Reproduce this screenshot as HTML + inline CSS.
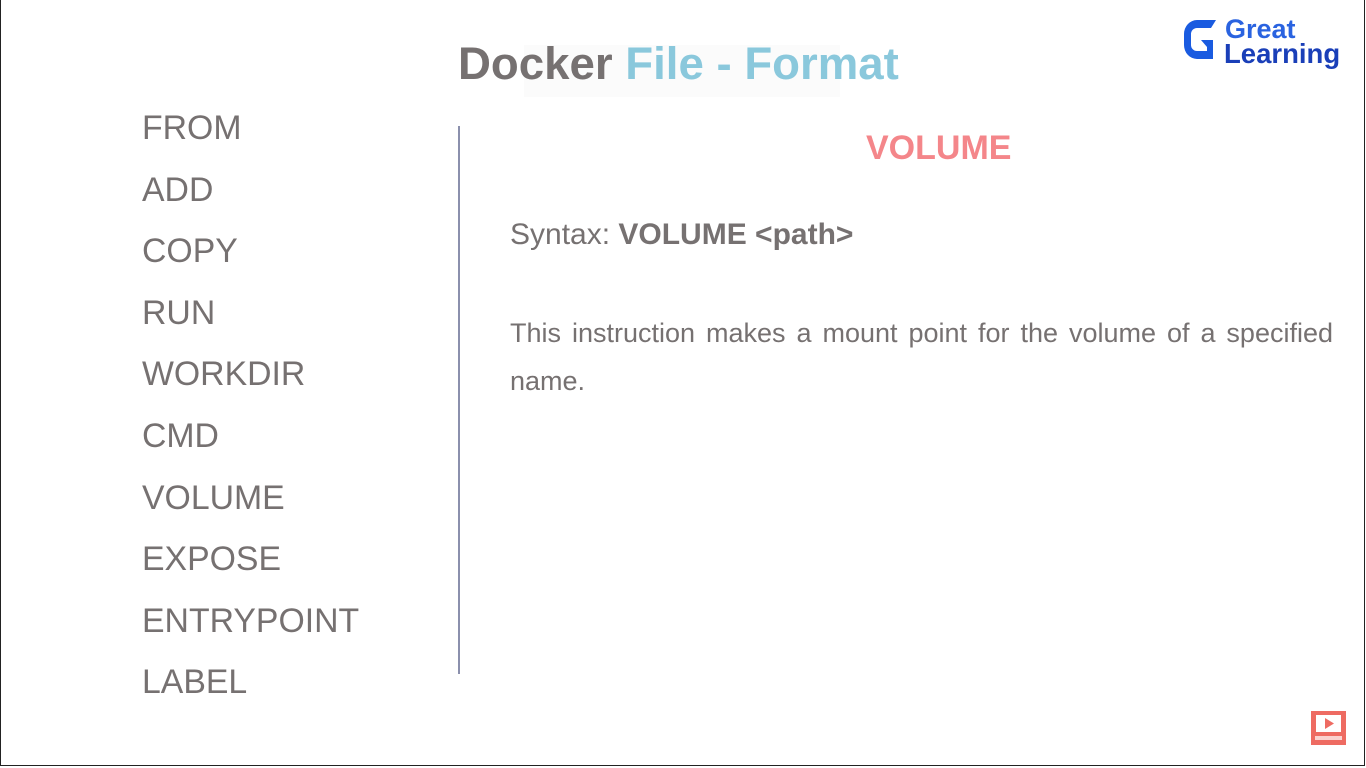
<!DOCTYPE html>
<html><head><meta charset="utf-8"><style>
body{margin:0;width:1366px;height:768px;background:#fff;position:relative;overflow:hidden;font-family:"Liberation Sans",sans-serif}
.frame{position:absolute;left:0;top:-2px;width:1363px;height:767px;border:1px solid #222;border-top:none}
.t{position:absolute;left:458px;top:38px;font-size:45.6px;font-weight:bold;color:#767171;white-space:nowrap}
.t span{color:#8ac8dc}
.ov{position:absolute;left:524px;top:45px;width:316px;height:52px;background:rgba(244,244,244,.35)}
.list{position:absolute;left:142px;top:98px;color:#767171;font-size:33.8px;line-height:61.6px}
.vl{position:absolute;left:458px;top:126px;width:2px;height:548px;background:#8b90ad}
.vol{position:absolute;left:866px;top:129px;font-size:34px;font-weight:bold;color:#f4868a}
.syn{position:absolute;left:510px;top:218px;font-size:30px;color:#767171}
.p{position:absolute;left:510px;top:309px;width:823px;font-size:27px;line-height:48px;color:#767171;text-align:justify;text-align-last:left}
.logo{position:absolute;left:1180px;top:14px}
.sub{position:absolute;left:1311px;top:711px;width:35px;height:34px;background:#ee6b62}
</style></head><body>
<div class="frame"></div>
<div class="ov"></div>
<div class="t">Docker <span>File - Format</span></div>
<div class="logo">
<svg width="165" height="56" viewBox="0 0 165 56">
<path d="M36 6 H17 A13 14 0 0 0 4 20 V31 A13 14 0 0 0 17 45 H33 V26 H21 L27 33 V37 H17 A6 6 0 0 1 11 31 V20 A6 6 0 0 1 17 14 H31 Z" fill="#1a5be0"/>
<text x="45" y="24" font-family="Liberation Sans" font-weight="bold" font-size="27" fill="#2a63e0">Great</text>
<text x="44" y="49" font-family="Liberation Sans" font-weight="bold" font-size="27.5" fill="#1a3fb8">Learning</text>
</svg></div>
<div class="list">FROM<br>ADD<br>COPY<br>RUN<br>WORKDIR<br>CMD<br>VOLUME<br>EXPOSE<br>ENTRYPOINT<br>LABEL</div>
<div class="vl"></div>
<div class="vol">VOLUME</div>
<div class="syn">Syntax: <b>VOLUME &lt;path&gt;</b></div>
<div class="p">This instruction makes a mount point for the volume of a specified name.</div>
<div class="sub"><svg width="35" height="34"><rect x="5" y="4" width="25" height="17" fill="#fff"/><path d="M14 7 L23 12.5 L14 18Z" fill="#ee6b62"/><rect x="4" y="25" width="27" height="4" fill="#fff" opacity=".7"/></svg></div>
</body></html>
